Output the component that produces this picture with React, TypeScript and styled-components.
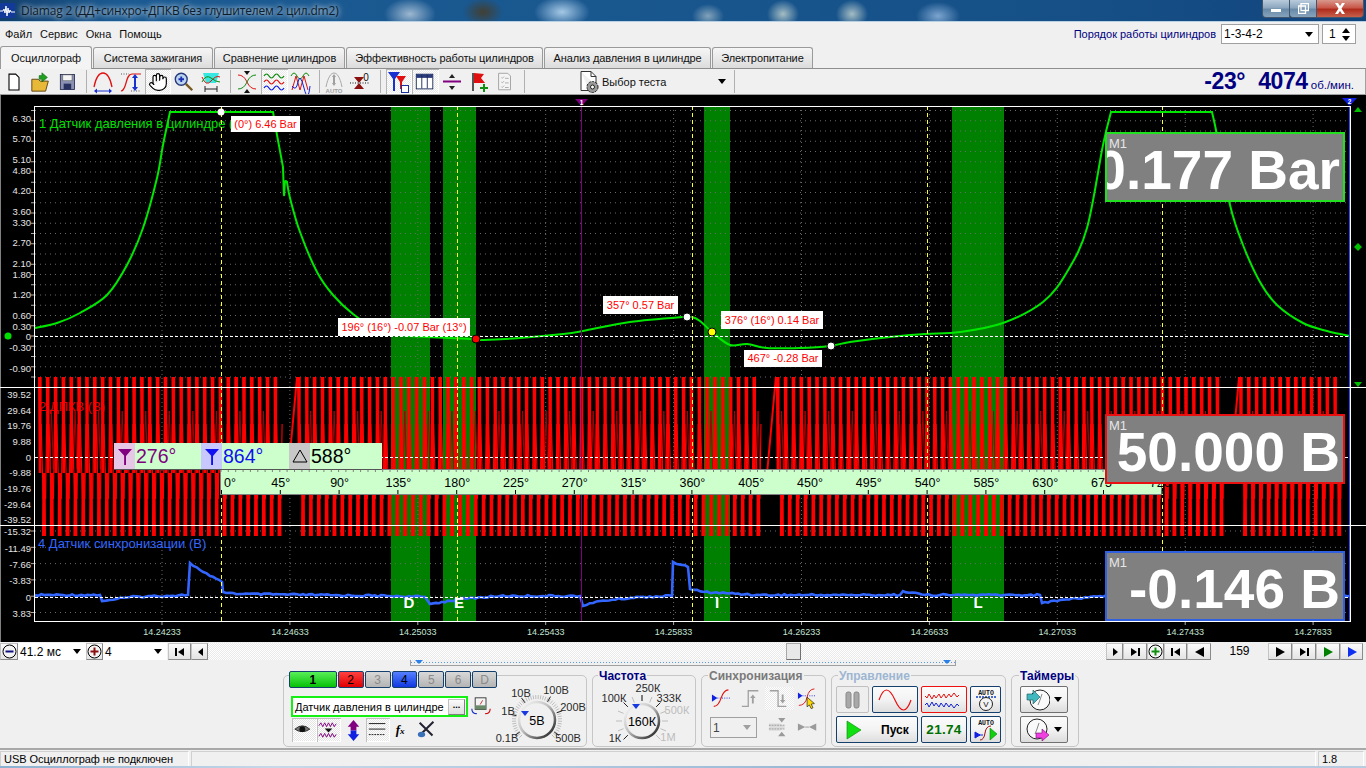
import React from "react";
import styled, { createGlobalStyle } from "styled-components";
import { Hand } from "lucide-react";

const Global = createGlobalStyle`
  html, body { margin: 0; padding: 0; background: #f0f0f0; }
  * { box-sizing: border-box; }
`;

const UI = `"Liberation Sans", Arial, sans-serif`;

const Page = styled.div`
  width: 1366px; height: 768px; overflow: hidden; display: flex; flex-direction: column;
  background: #f0f0f0; font-family: ${UI}; font-size: 11px; color: #000;
`;

/* ---------- window title ---------- */
const TitleBar = styled.div`
  height: 22px; flex: none; display: flex; align-items: flex-start; position: relative;
  border-bottom: 1px solid #b8d0e4;
  background:
    radial-gradient(ellipse 26px 16px at 410px 14px, rgba(200,215,230,.75), transparent),
    radial-gradient(ellipse 20px 14px at 483px 12px, rgba(70,60,40,.9), transparent),
    radial-gradient(ellipse 28px 16px at 562px 12px, rgba(190,220,245,.85), transparent),
    radial-gradient(ellipse 16px 12px at 708px 16px, rgba(175,195,205,.7), transparent),
    radial-gradient(ellipse 16px 14px at 783px 14px, rgba(200,215,210,.8), transparent),
    radial-gradient(ellipse 16px 14px at 852px 14px, rgba(200,215,210,.8), transparent),
    radial-gradient(ellipse 22px 14px at 938px 16px, rgba(150,185,225,.8), transparent),
    linear-gradient(90deg, #123f6c 0, #1b5a92 120px, #19578f 600px, #154f86 1100px, #12447c 1366px);
`;
const AppIcon = styled.svg`width: 15px; height: 15px; margin: 3px 0 0 0; flex: none;`;
const TitleText = styled.div`
  margin: 3px 0 0 6px; font: 12px/16px "Open Sans", sans-serif; color: #0c1c2c; letter-spacing: -0.2px;
  text-shadow: 0 0 5px rgba(255,255,255,.85), 0 0 8px rgba(255,255,255,.6);
`;
const WinButtons = styled.div`margin: 0 2px 0 auto; display: flex; height: 18px;`;
const WinBtn = styled.div<{ $w: number; $close?: boolean }>`
  width: ${p => p.$w}px; height: 18px; display: flex; align-items: center; justify-content: center;
  border: 1px solid #41566c; border-top: none; margin-left: -1px;
  border-radius: ${p => (p.$close ? "0 0 4px 0" : p.$w === 28 ? "0 0 0 4px" : "0")};
  background: ${p => (p.$close
    ? "linear-gradient(#d9988c 0, #c8584a 45%, #b02c1c 55%, #c6604c 100%)"
    : "linear-gradient(#b9cbdc 0, #8ea7bf 45%, #688aa8 55%, #86a3bc 100%)")};
`;

/* ---------- menu ---------- */
const MenuBar = styled.div`height: 24px; flex: none; display: flex; align-items: center; padding-left: 5px; background: #f0f0f0;`;
const MenuItem = styled.span`margin-right: 8px; font-size: 11px; color: #111;`;
const OrderBox = styled.div`margin-left: auto; display: flex; align-items: center; padding-right: 10px;`;
const OrderLabel = styled.span`color: #000080; font-size: 11px; margin-right: 5px;`;
const Combo = styled.div<{ $w: number; $h?: number; $bordered?: boolean; $disabled?: boolean }>`
  width: ${p => p.$w}px; height: ${p => p.$h ?? 17}px; display: flex; align-items: center; justify-content: space-between;
  background: ${p => (p.$disabled ? "#f0f0f0" : "#fff")}; padding: 0 5px 0 2px; font-size: 12px;
  color: ${p => (p.$disabled ? "#444" : "#000")};
  border: ${p => (p.$bordered ? "1px solid #a0a0a0" : "none")};
`;
const DownTri = styled.span<{ $c?: string }>`
  width: 0; height: 0; border-left: 4px solid transparent; border-right: 4px solid transparent;
  border-top: 5px solid ${p => p.$c ?? "#000"};
`;
const Spin = styled.div`
  width: 34px; height: 20px; margin-left: 3px; background: #fff; border: 1px solid #a0a0a0; display: flex;
  align-items: center; justify-content: space-between; padding: 0 5px 0 6px; font-size: 12px;
`;
const SpinArrows = styled.div`display: flex; flex-direction: column; gap: 3px;`;
const UpTri = styled.span`
  width: 0; height: 0; border-left: 4px solid transparent; border-right: 4px solid transparent; border-bottom: 5px solid #000;
`;

/* ---------- tabs ---------- */
const TabBar = styled.div`height: 23px; flex: none; display: flex; align-items: flex-end; gap: 1px; border-bottom: 1px solid #8e8e8e;`;
const Tab = styled.div<{ $w: number; $active?: boolean }>`
  width: ${p => p.$w}px; height: ${p => (p.$active ? 23 : 21)}px; display: flex; align-items: center; justify-content: center;
  border: 1px solid #9a9a9a; border-bottom: none; border-radius: 3px 3px 0 0; font-size: 11px; color: #111; letter-spacing: -0.1px;
  background: ${p => (p.$active ? "#f4f4f4" : "linear-gradient(#f6f6f6, #dcdcdc)")};
  margin-bottom: ${p => (p.$active ? -1 : 0)}px; position: relative;
`;

/* ---------- toolbar ---------- */
const ToolBar = styled.div`
  height: 26px; flex: none; display: flex; align-items: center; padding-left: 1px; position: relative;
  border-bottom: 1px solid #a0a0a0; border-right: 1px solid #a0a0a0;
`;
const ToolGroup = styled.div<{ $ml?: number }>`display: flex; align-items: center; margin-left: ${p => p.$ml ?? 0}px;`;
const ToolBtn = styled.div<{ $w: number; $active?: boolean }>`
  width: ${p => p.$w}px; height: 25px; display: flex; align-items: center; justify-content: center; flex: none;
  background: ${p => (p.$active ? "repeating-conic-gradient(#fff 0 25%, #e9e9e9 0 50%) 0 0/2px 2px" : "transparent")};
  box-shadow: ${p => (p.$active ? "inset 1px 1px 0 #b4b4b4, inset -1px -1px 0 #fff" : "none")};
`;
const Sep = styled.div<{ $ml?: number }>`width: 1px; height: 23px; background: #b0b0b0; flex: none; margin-left: ${p => p.$ml ?? 0}px;`;
const TestSelect = styled.div`display: flex; align-items: center; width: 201px; flex: none; padding-left: 52px; font-size: 11px; color: #111; white-space: nowrap;`;
const TestLabel = styled.span`margin-left: 1px; flex: 1;`;
const RpmBox = styled.div`margin-left: auto; padding-right: 11px; display: flex; align-items: baseline; color: #000080; white-space: nowrap;`;
const RpmBig = styled.span<{ $mr?: number }>`font-size: 23px; font-weight: 700; letter-spacing: -0.4px; margin-right: ${p => p.$mr ?? 0}px;`;
const RpmUnit = styled.span`font-size: 11.5px; margin-left: 3px;`;

/* ---------- chart ---------- */
const Chart = styled.div`height: 547px; flex: none; background: #000; position: relative; overflow: hidden;`;
const ChartSvg = styled.svg`display: block; position: absolute; inset: 0;`;
const Tag = styled.div<{ $x: number; $y: number; $w: number; $h?: number }>`
  position: absolute; left: ${p => p.$x}px; top: ${p => p.$y - 96}px; width: ${p => p.$w}px; height: ${p => p.$h ?? 18}px;
  background: #fff; color: #ff0000; font-size: 11px; line-height: ${p => p.$h ?? 18}px; text-align: center; white-space: nowrap;
`;
const Reading = styled.div<{ $y: number; $c: string }>`
  position: absolute; left: 1105px; top: ${p => p.$y - 96}px; width: 240px; height: 70px; background: #808080;
  border: 2px solid ${p => p.$c}; overflow: hidden; color: #fff; display: flex; justify-content: flex-end;
`;
const ReadingM = styled.span`position: absolute; left: 2px; top: 2px; font-size: 13px; color: #e6e6e6; line-height: 15px;`;
const ReadingVal = styled.span`font-size: 55px; line-height: 72px; font-weight: 700; white-space: nowrap; padding-right: 3px; flex: none;`;
const Delta = styled.div`
  position: absolute; left: 114px; top: 348px; width: 268px; height: 26px; background: #ccffcc; display: flex;
  box-shadow: 0 1px 0 #555;
`;
const DeltaSeg = styled.div<{ $w: number; $c: string }>`
  width: ${p => p.$w}px; display: flex; align-items: center; color: ${p => p.$c}; font-size: 19.5px; white-space: nowrap;
`;
const DeltaIcon = styled.div<{ $bg: string }>`width: 21px; height: 26px; background: ${p => p.$bg}; display: flex; align-items: center; justify-content: center; margin-right: 1px;`;

/* ---------- scroll row ---------- */
const ScrollRow = styled.div`height: 18px; flex: none; display: flex; align-items: stretch; padding-top: 1px; background: #f0f0f0;`;
const NavBtn = styled.div<{ $w: number; $ml?: number }>`
  width: ${p => p.$w}px; flex: none; display: flex; align-items: center; justify-content: center; margin-left: ${p => p.$ml ?? 0}px;
  background: linear-gradient(#fafafa, #e4e4e4); border: 1px solid #c4c4c4; border-right-color: #8a8a8a; border-bottom-color: #8a8a8a;
`;
const Track = styled.div`
  flex: none; width: 898px; position: relative;
  background: repeating-conic-gradient(#fff 0 25%, #eaeaea 0 50%) 0 0/2px 2px;
`;
const Thumb = styled.div`
  position: absolute; left: 578px; top: 0; width: 15px; height: 17px; background: #e8e8e8;
  border: 1px solid #a8a8a8; border-right-color: #707070; border-bottom-color: #707070;
`;
const Counter = styled.div`width: 57px; flex: none; text-align: center; font-size: 12px; line-height: 16px;`;

/* ---------- control panel ---------- */
const Panel = styled.div`height: 88px; flex: none; display: flex; flex-direction: column;`;
const Strip = styled.div`
  margin-left: 410px; width: 546px; height: 6px; flex: none; border: 1px solid #a0a0a0; border-top: none;
  background: repeating-linear-gradient(90deg, #5b9bdc 0 1px, transparent 1px 3px) 0 2px/100% 1px no-repeat; position: relative;
`;
const StripTri = styled.span<{ $l: number }>`
  position: absolute; top: 0; left: ${p => p.$l}px; width: 0; height: 0; border-left: 4px solid transparent;
  border-right: 4px solid transparent; border-top: 4px solid #2a80e8;
`;
const Groups = styled.div`display: flex; gap: 5px; padding-left: 283px; margin-top: 9px;`;
const Group = styled.div<{ $w: number }>`
  width: ${p => p.$w}px; height: 72px; flex: none; border: 1px solid #c6c6c6; border-radius: 5px; position: relative;
`;
const Legend = styled.span<{ $c: string; $l: number }>`
  position: absolute; top: -7px; left: ${p => p.$l}px; padding: 0 1px; background: #f0f0f0; font-size: 12px; line-height: 15px;
  font-weight: 700; color: ${p => p.$c}; white-space: nowrap;
`;
const ChannelWrap = styled.div`display: flex; margin-top: -5px; padding-left: 5px;`;
const ChannelLeft = styled.div`width: 208px; flex: none; display: flex; flex-direction: column;`;
const ChanRow = styled.div`display: flex; height: 17px; gap: 1px;`;
const ChanBtn = styled.div<{ $w: number; $kind: "green" | "red" | "blue" | "off" }>`
  width: ${p => p.$w}px; display: flex; align-items: center; justify-content: center; font-size: 12px;
  font-weight: ${p => (p.$kind === "green" ? 700 : 400)};
  color: ${p => (p.$kind === "off" ? "#8a8a8a" : "#000")};
  border: 1px solid #15406e; border-radius: 2px;
  background: ${p => ({
    green: "linear-gradient(#58f058, #08c008)",
    red: "linear-gradient(#ff4040, #e00000)",
    blue: "linear-gradient(#5580ff, #1038e0)",
    off: "linear-gradient(#d8d8d8, #b4b4b4)",
  }[p.$kind])};
`;
const NameRow = styled.div`display: flex; align-items: center; margin: 8px 0 0 2px; height: 21px;`;
const NameBox = styled.div`
  width: 177px; height: 21px; border: 2px solid #14f014; background: #fff; display: flex; align-items: center;
  justify-content: space-between; padding: 0 1px 0 2px; font-size: 11px; white-space: nowrap; flex: none;
`;
const Dots = styled.div`
  width: 17px; height: 16px; background: linear-gradient(#fafafa, #dedede); border: 1px solid #c0c0c0; border-right-color: #808080;
  border-bottom-color: #808080; font-size: 9px; font-weight: 700; line-height: 10px; text-align: center;
`;
const MeterSlot = styled.div`margin-left: 3px;`;
const IconRow = styled.div`display: flex; margin: 1px 0 0 3px;`;
const IconCell = styled.div<{ $active?: boolean }>`
  width: 24.5px; height: 24px; display: flex; align-items: center; justify-content: center;
  background: ${p => (p.$active ? "repeating-conic-gradient(#fff 0 25%, #e4e4e4 0 50%) 0 0/2px 2px" : "transparent")};
  box-shadow: ${p => (p.$active ? "inset 1px 1px 0 #c0c0c0, inset -1px -1px 0 #fff" : "none")};
`;
const DialSlot = styled.div`margin: 13px 0 0 -1px;`;
const FreqSlot = styled.div`padding: 4px 0 0 4px;`;
const SyncGrid = styled.div`
  display: grid; grid-template-columns: repeat(4, 28.5px); grid-template-rows: 23px 23px; row-gap: 6px; padding: 11px 0 0 6px;
`;
const SyncCell = styled.div<{ $span?: number; $active?: boolean }>`
  grid-column: span ${p => p.$span ?? 1}; display: flex; align-items: center; justify-content: center;
  background: ${p => (p.$active ? "repeating-conic-gradient(#fff 0 25%, #e8e8e8 0 50%) 0 0/2px 2px" : "transparent")};
`;
const SyncCombo = styled.div`width: 47px; margin: 0 auto 0 2px;`;
const CtlGrid = styled.div`
  display: grid; grid-template-columns: 33px 46px 46px 31px; grid-template-rows: 27px 27px; column-gap: 3px; row-gap: 3px; padding: 10px 0 0 4px;
`;
const CtlBtn = styled.div<{ $span?: number; $b: string; $off?: boolean }>`
  grid-column: span ${p => p.$span ?? 1}; display: flex; align-items: center; justify-content: center;
  border: 1px solid ${p => p.$b}; border-radius: 2px;
  background: ${p => (p.$off ? "#eeeeee" : "linear-gradient(#fbfbfb 0, #f3f3f3 50%, #dedede 100%)")};
`;
const StartInner = styled.div`display: flex; align-items: center; width: 100%; padding-left: 8px; font-weight: 700; font-size: 12px;`;
const StartLabel = styled.span`margin-left: 18px;`;
const Hz = styled.span`color: #007000; font-weight: 700; font-size: 13.5px; letter-spacing: .3px;`;
const TimerCol = styled.div`display: flex; flex-direction: column; gap: 3px; padding: 10px 0 0 8px;`;
const TimerBtn = styled.div`
  width: 48px; height: 27px; display: flex; align-items: center; justify-content: center; gap: 4px; border: 1px solid #707070; border-radius: 2px;
  background: linear-gradient(#fbfbfb 0, #f3f3f3 50%, #dcdcdc 100%);
`;

/* ---------- status ---------- */
const Status = styled.div`height: 18px; flex: none; display: flex; border-top: 2px solid #a8a8a8; font-size: 11px; letter-spacing: -0.05px; padding-top: 1px; background: #f0f0f0;`;
const StatusCell = styled.div<{ $w?: number; $grow?: boolean }>`
  width: ${p => (p.$w ? p.$w + "px" : "auto")}; flex: ${p => (p.$grow ? 1 : "none")}; border-left: 1px solid #d0d0d0; border-top: 1px solid #d0d0d0;
  border-right: 1px solid #fff; padding-left: 3px; line-height: 14px; white-space: nowrap; margin-right: 2px;
`;
const Taskbar = styled.div`height: 3px; flex: none; background: linear-gradient(90deg, #8ab0d0, #c8d8e8 20%, #9ab8d4 60%, #b8cce0);`;

/* ---------- drawing helpers ---------- */
const Ic: React.FC<{ s?: number; w?: number; h?: number; vb?: string; children: React.ReactNode }> = ({ s = 24, w, h, vb = "0 0 24 24", children }) => (
  <svg width={w ?? s} height={h ?? s} viewBox={vb} style={{ display: "block", flex: "none" }}>{children}</svg>
);

const Wave3 = () => (
  <>
    <path d="M2 6q2.5-4 5 0t5 0 5 0 5 0" fill="none" stroke="#0a8a0a" strokeWidth="1.2" />
    <path d="M2 12q2.5-4 5 0t5 0 5 0 5 0" fill="none" stroke="#e01010" strokeWidth="1.2" />
    <path d="M2 18q2.5-4 5 0t5 0 5 0 5 0" fill="none" stroke="#1020e0" strokeWidth="1.2" />
  </>
);

const NavGlyph: React.FC<{ kind: "first" | "prev" | "next" | "last" | "big-prev" | "big-next"; c?: string }> = ({ kind, c = "#000" }) => {
  const d = {
    first: "M2 3h2v8H2zM11 3v8L5 7z",
    prev: "M10 3v8L5 7z",
    next: "M5 3v8l5-4z",
    last: "M12 3h-2v8h2zM3 3v8l6-4z",
    "big-prev": "M12 2v10L3 7z",
    "big-next": "M3 2v10l9-5z",
  }[kind];
  return <Ic w={14} h={14} vb="0 0 14 14"><path d={d} fill={c} /></Ic>;
};

const RoundGlyph: React.FC<{ c: string; plus?: boolean }> = ({ c, plus }) => (
  <Ic w={15} h={15} vb="0 0 15 15">
    <circle cx="7.5" cy="7.5" r="6.5" fill="#f4f4f4" stroke="#000" />
    <path d={plus ? "M3.5 6.5h3v-3h2v3h3v2h-3v3h-2v-3h-3z" : "M3.5 6.5h8v2h-8z"} fill={c} />
  </Ic>
);

const Dial: React.FC<{
  id: string; w: number; h: number; cx: number; cy: number; r: number; center: string; tr: [number, number]; major: number[];
  labels: { t: string; x: number; y: number; off?: boolean }[]; minorLong?: boolean;
}> = ({ id, w, h, cx, cy, r, center, tr, labels, major, minorLong }) => {
  const minor: number[] = [];
  const step = minorLong ? 22.5 : 6;
  for (let a = -135; a <= 135.1; a += step) minor.push(a);
  const seg = (a: number, r0: number, r1: number) => {
    const t = ((a - 90) * Math.PI) / 180;
    return `M${cx + r0 * Math.cos(t)} ${cy + r0 * Math.sin(t)}L${cx + r1 * Math.cos(t)} ${cy + r1 * Math.sin(t)}`;
  };
  return (
    <svg width={w} height={h} style={{ display: "block", overflow: "visible" }}>
      <defs>
        <linearGradient id={id} x1="0" y1="0" x2="1" y2="1">
          <stop offset="0" stopColor="#fff" /><stop offset=".45" stopColor="#c0c0c0" /><stop offset="1" stopColor="#111" />
        </linearGradient>
      </defs>
      <path d={minor.map(a => seg(a, r + 3, r + (minorLong ? 9 : 7))).join("")} stroke="#bdbdbd" strokeWidth="1" fill="none" />
      <path d={major.map(a => seg(a, r + 3, r + 9)).join("")} stroke="#222" strokeWidth="1" fill="none" />
      <circle cx={cx} cy={cy} r={r} fill="#f0f0f0" stroke={`url(#${id})`} strokeWidth="2.5" />
      <path d={`M${tr[0] - 4} ${tr[1] - 3}h8l-4 5z`} fill="#1838e0" />
      <text x={cx} y={cy + 4.5} textAnchor="middle" fontSize="12.5" fontFamily="Liberation Sans" fill="#000">{center}</text>
      {labels.map(l => (
        <text key={l.t} x={l.x} y={l.y} textAnchor="middle" fontSize="11" fontFamily="Liberation Sans" fill={l.off ? "#bcbcbc" : "#2a2a2a"}>{l.t}</text>
      ))}
    </svg>
  );
};

/* ---------- chart data ---------- */
type Pt = [number, number];
const GREEN_SEGS: Pt[][] = [
  [[35, 329], [57, 324], [80, 314], [107, 296], [127, 266], [143, 229], [157, 179], [163, 146], [170, 113]],
  [[170, 113], [273, 113]],
  [[273, 113], [277, 136], [283, 168]],
  [[283, 168], [284, 196], [285, 183], [287, 183]],
  [[287, 183], [290, 199], [300, 233], [317, 273], [333, 296], [353, 315], [375, 329], [400, 336], [427, 338], [473, 340],
   [483, 341], [520, 339], [563, 335], [583, 332], [630, 323], [683, 318], [692, 318], [700, 322], [712, 333], [730, 346], [747, 345], [767, 349],
   [800, 349], [830, 347], [850, 343], [890, 338], [925, 335], [960, 333], [1003, 324], [1043, 303], [1067, 273], [1087, 229], [1103, 146], [1111, 113]],
  [[1111, 113], [1212, 113]],
  [[1212, 113], [1217, 136], [1230, 206], [1243, 246], [1260, 283], [1277, 306], [1303, 324], [1327, 332], [1350, 337]],
];
const BLUE: Pt[] = [
  [35, 596], [100, 596], [102, 602], [110, 601], [130, 598], [188, 596], [190, 564], [200, 571], [210, 577], [222, 583], [223, 593], [240, 595], [390, 597],
  [425, 598], [430, 605], [460, 600], [500, 597], [580, 597], [583, 607], [600, 602], [640, 598], [672, 597], [673, 563], [688, 568], [690, 590], [704, 593],
  [760, 596], [900, 596], [903, 592], [925, 596], [1040, 596], [1042, 604], [1060, 601], [1100, 597], [1350, 597],
];
const rnd = (n: number) => {
  const v = Math.sin(n * 12.9898) * 43758.5453;
  return (v - Math.floor(v)) * 2 - 1;
};
const noisy = (pts: Pt[], amp: number) => {
  let d = `M${pts[0][0]} ${pts[0][1]}`;
  let n = 0;
  for (let i = 1; i < pts.length; i++) {
    const [x0, y0] = pts[i - 1];
    const [x1, y1] = pts[i];
    const steps = Math.max(1, Math.floor((x1 - x0) / 3));
    for (let s = 1; s <= steps; s++) {
      const t = s / steps;
      const e = s === steps ? 0 : rnd(++n) * amp;
      d += `L${(x0 + (x1 - x0) * t).toFixed(1)} ${(y0 + (y1 - y0) * t + e).toFixed(1)}`;
    }
  }
  return d;
};
/* Catmull-Rom through each segment, so the pressure trace reads as a curve */
const smooth = (segs: Pt[][]) => {
  let d = `M${segs[0][0][0]} ${segs[0][0][1]}`;
  segs.forEach(pts => {
    for (let i = 0; i < pts.length - 1; i++) {
      const p0 = pts[Math.max(0, i - 1)];
      const p1 = pts[i];
      const p2 = pts[i + 1];
      const p3 = pts[Math.min(pts.length - 1, i + 2)];
      const c1x = p1[0] + (p2[0] - p0[0]) / 6;
      const c1y = p1[1] + (p2[1] - p0[1]) / 6;
      const c2x = p2[0] - (p3[0] - p1[0]) / 6;
      const c2y = p2[1] - (p3[1] - p1[1]) / 6;
      d += `C${c1x.toFixed(1)} ${c1y.toFixed(1)} ${c2x.toFixed(1)} ${c2y.toFixed(1)} ${p2[0]} ${p2[1]}`;
    }
  });
  return d;
};
const buildRed = () => {
  const gaps = [[284, 298], [757, 773], [1220, 1238]];
  let bars = "";
  let zig = "";
  let dark = "";
  let ramps = "";
  let pen = false;
  const per = 7.85;
  for (let k = 5; ; k++) {
    const x = -0.25 + per * k;
    if (x > 1340) break;
    const inGap = gaps.some(g => x + 3 > g[0] && x < g[1]);
    if (inGap) { pen = false; continue; }
    if (!pen) {
      if (x > 100) ramps += `M${x - 10} 476L${x - 1} 378`;
      pen = true;
    }
    bars += `M${x - 1} 378H${x + 2.7}L${x + 2.5} 474H${x - 0.3}Z`;
    bars += `M${x + 3} 537H${x + 7}L${x + 6.6} 474H${x + 3.4}Z`;
    zig += `M${x + 2.2} 425L${x + 4.2} 500M${x + 6.6} 500L${x + 7.6} 425`;
    if (k % 3 === 0) dark += `M${x + 3} 470L${x + 4.7} 412L${x + 6.4} 470`;
  }
  return { bars, zig, dark, ramps };
};
const RED = buildRed();

const YL: [string, number][] = [
  ["6.30", 119], ["5.70", 139], ["5.10", 160], ["4.80", 171], ["4.20", 191], ["3.60", 212], ["3.30", 223], ["2.70", 243], ["2.10", 264], ["1.80", 275],
  ["1.20", 295], ["0.60", 316], ["0.30", 327], ["0", 337], ["-0.30", 348], ["-0.90", 369],
  ["39.52", 395], ["29.64", 411], ["19.76", 426], ["9.88", 442], ["0", 458], ["-9.88", 473], ["-19.76", 489], ["-29.64", 505], ["-39.52", 520],
  ["-15.32", 532], ["-11.49", 549], ["-7.66", 565], ["-3.83", 581], ["0", 598], ["3.83", 614],
];
const XL = ["14.24233", "14.24633", "14.25033", "14.25433", "14.25833", "14.26233", "14.26633", "14.27033", "14.27433", "14.27833"];
const xGrid = XL.map((_, i) => 162 + i * 127.9);
const range = (a: number, b: number, s: number) => { const r: number[] = []; for (let v = a; v <= b; v += s) r.push(v); return r; };
const hGrid = [...range(337 - 10.25 * 22, 378, 10.25), ...range(526 + 6, 622, 16.3)];
const Y = (y: number) => y - 96;

const Plot = () => (
  <ChartSvg width="1366" height="547" viewBox="0 0 1366 547" fontFamily="Liberation Sans">
    <line x1=".5" y1="0" x2=".5" y2="547" stroke="#808080" />
    {[[391, 430], [443, 476], [704, 730], [952, 1004]].map(([a, b]) => (
      <rect key={a} x={a} y={Y(107)} width={b - a} height={515} fill="#008000" />
    ))}
    <path d={hGrid.map(y => `M35 ${Y(y)}H1349`).join("")} stroke="#6a6a6a" strokeDasharray="1 4" />
    <path d={xGrid.map(x => `M${x} ${Y(107)}V${Y(622)}`).join("")} stroke="#6a6a6a" strokeDasharray="1 3" />
    <path d={hGrid.map(y => `M31 ${Y(y)}H34`).join("")} stroke="#aaa" />
    <path d={xGrid.map(x => `M${x} ${Y(622)}v4`).join("")} stroke="#aaa" />
    <g fontSize="9.5" fill="#e4e4e4" textAnchor="end">
      {YL.map(([t, y]) => <text key={t + y} x="31" y={Y(y) + 3.5}>{t}</text>)}
    </g>
    <g fontSize="9" fill="#c4e4d4" textAnchor="middle">
      {XL.map((t, i) => <text key={t} x={xGrid[i]} y={Y(636)}>{t}</text>)}
    </g>
    <text x="39" y={Y(129)} fontSize="13" fill="#00e000">1 Датчик давления в цилиндре (Bar)</text>
    <text x="38" y={Y(549)} fontSize="13" fill="#3366ff">4 Датчик синхронизации (В)</text>
    <text x="39" y={Y(412)} fontSize="13" fill="#e80000">2 ДПКВ (В)</text>
    <g transform="translate(0,-96)">
      <path d={RED.dark} fill="none" stroke="#a80000" strokeWidth="1" />
      <path d={RED.zig} fill="none" stroke="#ff0000" strokeWidth="1.1" />
      <path d={RED.bars} fill="#ff0000" />
      <path d={RED.ramps} fill="none" stroke="#ff0000" strokeWidth="2" />
      <path d={noisy(BLUE, 0.9)} fill="none" stroke="#3366ff" strokeWidth="2.6" />
      <path d={smooth(GREEN_SEGS)} fill="none" stroke="#00e800" strokeWidth="2" />
    </g>
    <path d={[337, 458, 598].map(y => `M35 ${Y(y) + .5}H1349`).join("")} stroke="#fff" strokeDasharray="3 2" />
    <path d={[221, 457, 692, 927, 1162].map(x => `M${x + .5} ${Y(107)}V${Y(622)}`).join("")} stroke="#ffff30" strokeDasharray="4 3" />
    <path d={`M581.5 ${Y(107)}V${Y(622)}`} stroke="#800080" />
    <path d={`M1349.5 ${Y(107)}V${Y(622)}`} stroke="#3050ff" />
    <path d={`M34 ${Y(107) + .5}H1351M34.5 ${Y(107)}V${Y(622)}M34 ${Y(622) + .5}H1351M1350.5 ${Y(107)}V${Y(622)}`} stroke="#fff" fill="none" />
    <path d={`M0 ${Y(388) + .5}H1366M0 ${Y(526) + .5}H1366`} stroke="#fff" />

    <circle cx="221" cy={Y(113)} r="3.5" fill="#fff" />
    <circle cx="476" cy={Y(340)} r="4" fill="#ff0000" stroke="#000" />
    <circle cx="687" cy={Y(318)} r="4" fill="#fff" stroke="#000" />
    <circle cx="712" cy={Y(333)} r="4" fill="#ffff00" stroke="#000" />
    <circle cx="831" cy={Y(347)} r="4" fill="#fff" stroke="#000" />
    <circle cx="8" cy={Y(337)} r="3.5" fill="#00e000" />

    <path d={`M575 ${Y(100)}h13l-6.5 7z`} fill="#800080" />
    <text x="581.5" y={Y(106)} fontSize="6.5" fontWeight="700" fill="#fff" textAnchor="middle">1</text>
    <path d={`M1342 ${Y(99)}h15l-7.5 8z`} fill="#1020e0" />
    <text x="1349.5" y={Y(105)} fontSize="6.5" fontWeight="700" fill="#fff" textAnchor="middle">2</text>
    <path d={`M1358 ${Y(108)}l4 5h-8z`} fill="#00c000" />
    <path d={`M1358 ${Y(244)}l4 4-4 4-4-4z`} fill="#00c000" />
    <path d={`M1354 ${Y(383)}h8l-4 5z`} fill="#00c000" />

    <g fontSize="15" fontWeight="700" fill="#fff" textAnchor="middle">
      <text x="409" y={Y(609)}>D</text>
      <text x="459" y={Y(609)}>E</text>
      <text x="717" y={Y(609)}>I</text>
      <text x="978" y={Y(609)}>L</text>
    </g>

    <rect x="220.5" y={Y(470) + .5} width="941" height="25" fill="#ccffcc" stroke="#808080" />
    <path d={range(0, 128, 1).map(i => `M${(221 + i * 7.35).toFixed(1)} ${Y(471)}v2`).join("")} stroke="#808080" />
    <path d={range(0, 16, 1).map(i => `M${(221 + i * 58.8 + .5).toFixed(1)} ${Y(491)}v4`).join("")} stroke="#000" />
    <g fontSize="12.5" fill="#000" textAnchor="middle">
      <text x="230" y={Y(488)}>0°</text>
      {range(1, 16, 1).map(i => <text key={i} x={221 + i * 58.8 + 1} y={Y(488)}>{i * 45}°</text>)}
    </g>
  </ChartSvg>
);

const Funnel: React.FC<{ c: string }> = ({ c }) => (
  <Ic w={16} h={20} vb="0 0 16 20">
    <path d="M1 3h14L9 10v9H7.5V10z" fill={c} />
    <path d="M8 8v11" stroke={c} strokeWidth="1.5" />
  </Ic>
);

const Arrow2H = "M3 21l3-2.5v2h12v-2l3 2.5-3 2.5v-2H6v2z";

const App: React.FC = () => (
  <Page>
    <Global />
    <TitleBar>
      <AppIcon viewBox="0 0 15 15">
        <rect width="15" height="15" fill="#123a9a" />
        <path d="M0 8h3l1-2 1 4 1-7 1 10 1-8 1 5 1-3 1 2h4" fill="none" stroke="#fff" strokeWidth="1" />
      </AppIcon>
      <TitleText>Diamag 2 (ДД+синхро+ДПКВ без глушителем 2 цил.dm2)</TitleText>
      <WinButtons>
        <WinBtn $w={28}><Ic w={10} h={6} vb="0 0 10 6"><rect x="0" y="3" width="10" height="3" fill="#fff" /></Ic></WinBtn>
        <WinBtn $w={28}><Ic w={11} h={11} vb="0 0 11 11"><path d="M3 .5h7.5v7H3zM.5 3h7v7.5h-7z" fill="none" stroke="#fff" strokeWidth="1.3" /></Ic></WinBtn>
        <WinBtn $w={48} $close><Ic w={12} h={11} vb="0 0 12 11"><path d="M1 0h3l2 3 2-3h3L7.5 5.5 11 11H8L6 8l-2 3H1l3.5-5.5z" fill="#fff" /></Ic></WinBtn>
      </WinButtons>
    </TitleBar>

    <MenuBar>
      <MenuItem>Файл</MenuItem>
      <MenuItem>Сервис</MenuItem>
      <MenuItem>Окна</MenuItem>
      <MenuItem>Помощь</MenuItem>
      <OrderBox>
        <OrderLabel>Порядок работы цилиндров</OrderLabel>
        <Combo $w={98} $h={20} $bordered>1-3-4-2<DownTri /></Combo>
        <Spin>1<SpinArrows><UpTri /><DownTri /></SpinArrows></Spin>
      </OrderBox>
    </MenuBar>

    <TabBar>
      <Tab $w={92} $active>Осциллограф</Tab>
      <Tab $w={120}>Система зажигания</Tab>
      <Tab $w={131}>Сравнение цилиндров</Tab>
      <Tab $w={197}>Эффективность работы цилиндров</Tab>
      <Tab $w={167}>Анализ давления в цилиндре</Tab>
      <Tab $w={101}>Электропитание</Tab>
    </TabBar>

    <ToolBar>
      <ToolGroup>
        <ToolBtn $w={26.5}><Ic s={20}><path d="M6 2.5h8l4 4v15H6z" fill="#fff" stroke="#000" strokeWidth="1.3" /></Ic></ToolBtn>
        <ToolBtn $w={26.5}><Ic s={22}><path d="M2 9h7l2 2h9l-3 11H2z" fill="#e8b838" stroke="#5a4010" /><path d="M13 2l6 5-6 5V9h-3V5h3z" fill="#20a020" stroke="#0a600a" strokeWidth=".6" /></Ic></ToolBtn>
        <ToolBtn $w={26.5}><Ic s={20}><rect x="4" y="3" width="17" height="18" fill="#8a90b0" stroke="#202850" /><rect x="7" y="3.5" width="11" height="7" fill="#f4f4f4" stroke="#555" strokeWidth=".6" /><rect x="8" y="14" width="9" height="7" fill="#283060" /></Ic></ToolBtn>
      </ToolGroup>
      <Sep $ml={5.5} />
      <ToolGroup $ml={2.5}>
        <ToolBtn $w={27.5}><Ic s={24}><path d="M3 17C5 7 8 3 12 3s7 4 9 14" fill="none" stroke="#e01010" strokeWidth="1.3" /><path d={Arrow2H} fill="#1830d0" /></Ic></ToolBtn>
        <ToolBtn $w={27.5}><Ic s={24}><path d="M2 21c6 0 4-17 11-17h9" fill="none" stroke="#e01010" strokeWidth="1.2" /><path d="M2 4h8M12 21h9" stroke="#555" strokeDasharray="1 1.5" /><path d="M16 4l3 4h-2v9h2l-3 4-3-4h2V8h-2z" fill="#1830d0" /></Ic></ToolBtn>
        <ToolBtn $w={26} $active><Hand size={20} strokeWidth={1.4} color="#000" fill="#fff" /></ToolBtn>
        <ToolBtn $w={26}><Ic s={22}><circle cx="9" cy="9" r="6.5" fill="#bcd4f0" stroke="#263a7a" strokeWidth="1.5" /><path d="M6 8h2V6h2v2h2v2h-2v2H8v-2H6z" fill="#1830b0" /><path d="M14 14l7 7" stroke="#7a5a20" strokeWidth="2.6" /></Ic></ToolBtn>
        <ToolBtn $w={29}><Ic s={24}><path d="M4 3h16l-3 10H7z" fill="#38e8e0" /><path d="M3 7q4 10 9 4t9-4" fill="none" stroke="#e01010" /><path d="M3 12q4-8 9-4t9 4" fill="none" stroke="#108a10" /><path d="M6 16v6M18 16v6M6 19h12" stroke="#222" fill="none" /></Ic></ToolBtn>
      </ToolGroup>
      <Sep $ml={4} />
      <ToolGroup $ml={3}>
        <ToolBtn $w={27}><Ic s={24}><path d="M3 5q6 0 9 7t9 7" fill="none" stroke="#e01010" /><path d="M3 19q6 0 9-7t9-7" fill="none" stroke="#108a10" /><path d="M9 1h6l-3 4zM9 23h6l-3-4z" fill="#111" /></Ic></ToolBtn>
        <ToolBtn $w={27} $active><Ic s={24}><Wave3 /></Ic></ToolBtn>
        <ToolBtn $w={27}><Ic s={24}><path d="M2 6q3-6 6 0t6 0 6 0" fill="none" stroke="#108a10" /><path d="M3 20l4-14 4 14 4-14 4 14" fill="none" stroke="#e01010" /><path d="M3 16q4 6 6-4t6 6 6-2" fill="none" stroke="#1020e0" /></Ic></ToolBtn>
      </ToolGroup>
      <Sep $ml={4} />
      <ToolGroup $ml={1}>
        <ToolBtn $w={26}><Ic s={24}><path d="M4 17C6 7 9 3 12 3s6 4 8 14" fill="none" stroke="#a8a8a8" /><path d="M12 4l2 3h-1v6h1l-2 3-2-3h1V7h-1z" fill="#a0a0a0" /><text x="12" y="23" textAnchor="middle" fontSize="6" fontFamily="Liberation Sans" fontWeight="700" fill="#a0a0a0">AUTO</text></Ic></ToolBtn>
        <ToolBtn $w={26}><Ic s={24}><path d="M6 7h10l-5 6zM6 19h10l-5-6z" fill="#8a1010" /><path d="M2 13h20" stroke="#111" strokeDasharray="1 1.5" /><text x="18" y="11" textAnchor="middle" fontSize="10" fontFamily="Liberation Sans" fill="#111">0</text></Ic></ToolBtn>
      </ToolGroup>
      <Sep $ml={7} />
      <ToolGroup $ml={5}>
        <ToolBtn $w={26.5} $active><Ic s={24}><path d="M1 2h12l-5 7v12H6V9z" fill="#1830d0" /><path d="M9 6h10l-4 6v7h-2v-7z" fill="#e01010" /><rect x="14.5" y="15.5" width="7" height="7" fill="#fff" stroke="#1830a0" /></Ic></ToolBtn>
        <ToolBtn $w={26.5} $active><Ic s={22}><rect x="2.5" y="3.5" width="18" height="16" fill="#fff" stroke="#1a2a5a" /><rect x="2.5" y="3.5" width="18" height="4" fill="#2a3a7a" /><path d="M8.5 4v15M14.5 4v15" stroke="#1a2a5a" /></Ic></ToolBtn>
        <ToolBtn $w={26.5}><Ic s={24}><path d="M3 11.5h18" stroke="#800080" strokeWidth="2" /><path d="M12 4l3 4H9zM12 20l3-4H9z" fill="#222" /></Ic></ToolBtn>
        <ToolBtn $w={26.5}><Ic s={24}><path d="M7 3v18" stroke="#222" strokeWidth="1.5" /><path d="M8 3l10 1-3 4 4 5H8z" fill="#e01010" /><path d="M14 17h3v-3h2v3h3v2h-3v3h-2v-3h-3z" fill="#109010" /></Ic></ToolBtn>
        <ToolBtn $w={26.5}><Ic s={22}><path d="M5 2.5h10l3 3v15H5z" fill="#f4f4f4" stroke="#a0a0a0" /><path d="M8 7l1 1 2-2M8 12l1 1 2-2M8 17l1 1 2-2M12 8h4M12 13h4M12 18h4" stroke="#a8a8a8" fill="none" /></Ic></ToolBtn>
      </ToolGroup>
      <Sep $ml={6} />
      <TestSelect>
        <Ic s={24}><path d="M4 1.5h10l5 5v9M4 1.5v19h8" fill="#fff" stroke="#333" /><path d="M14 1.5v5h5" fill="none" stroke="#333" /><circle cx="15.5" cy="17" r="5.5" fill="#9a9a9a" stroke="#222" strokeDasharray="2.5 1" /><circle cx="15.5" cy="17" r="2" fill="#fff" stroke="#222" /></Ic>
        <TestLabel>Выбор теста</TestLabel>
        <DownTri />
      </TestSelect>
      <Sep $ml={8} />
      <RpmBox>
        <RpmBig $mr={13}>-23°</RpmBig>
        <RpmBig>4074</RpmBig>
        <RpmUnit>об./мин.</RpmUnit>
      </RpmBox>
    </ToolBar>

    <Chart>
      <Plot />
      <Tag $x={231} $y={117} $w={69} $h={16}>(0°) 6.46 Bar</Tag>
      <Tag $x={338} $y={319} $w={132}>196° (16°) -0.07 Bar (13°)</Tag>
      <Tag $x={603} $y={297} $w={75}>357° 0.57 Bar</Tag>
      <Tag $x={721} $y={312} $w={102}>376° (16°) 0.14 Bar</Tag>
      <Tag $x={744} $y={351} $w={78} $h={17}>467° -0.28 Bar</Tag>
      <Delta>
        <DeltaSeg $w={87} $c="#800080"><DeltaIcon $bg="#e6c8e6"><Funnel c="#800080" /></DeltaIcon>276°</DeltaSeg>
        <DeltaSeg $w={88} $c="#1010f0"><DeltaIcon $bg="#c8c8ff"><Funnel c="#1010f0" /></DeltaIcon>864°</DeltaSeg>
        <DeltaSeg $w={93} $c="#000">
          <DeltaIcon $bg="#c8c8c8"><Ic w={16} h={16} vb="0 0 16 16"><path d="M8 2l7 12H1z" fill="none" stroke="#000" /></Ic></DeltaIcon>588°
        </DeltaSeg>
      </Delta>
      <Reading $y={133} $c="#20e020"><ReadingM>M1</ReadingM><ReadingVal>0.177 Bar</ReadingVal></Reading>
      <Reading $y={415} $c="#e81010"><ReadingM>M1</ReadingM><ReadingVal>50.000 В</ReadingVal></Reading>
      <Reading $y={552} $c="#3060e0"><ReadingM>M1</ReadingM><ReadingVal>-0.146 В</ReadingVal></Reading>
    </Chart>

    <ScrollRow>
      <NavBtn $w={18}><RoundGlyph c="#101080" /></NavBtn>
      <Combo $w={68}>41.2 мс<DownTri /></Combo>
      <NavBtn $w={17}><RoundGlyph c="#8a1010" plus /></NavBtn>
      <Combo $w={64}>4<DownTri /></Combo>
      <NavBtn $w={23} $ml={1}><NavGlyph kind="first" /></NavBtn>
      <NavBtn $w={17}><NavGlyph kind="prev" /></NavBtn>
      <Track><Thumb /></Track>
      <NavBtn $w={17}><NavGlyph kind="next" /></NavBtn>
      <NavBtn $w={24}><NavGlyph kind="last" /></NavBtn>
      <NavBtn $w={17}><RoundGlyph c="#109010" plus /></NavBtn>
      <NavBtn $w={23}><NavGlyph kind="first" /></NavBtn>
      <NavBtn $w={24}><NavGlyph kind="big-prev" /></NavBtn>
      <Counter>159</Counter>
      <NavBtn $w={24}><NavGlyph kind="big-next" /></NavBtn>
      <NavBtn $w={24}><NavGlyph kind="last" /></NavBtn>
      <NavBtn $w={24}><NavGlyph kind="big-next" c="#008000" /></NavBtn>
      <NavBtn $w={23}><NavGlyph kind="big-next" c="#1030f0" /></NavBtn>
    </ScrollRow>

    <Panel>
      <Strip><StripTri $l={4} /><StripTri $l={532} /></Strip>
      <Groups>
        <Group $w={304}>
          <ChannelWrap>
            <ChannelLeft>
              <ChanRow>
                <ChanBtn $w={48} $kind="green">1</ChanBtn>
                <ChanBtn $w={26} $kind="red">2</ChanBtn>
                <ChanBtn $w={26} $kind="off">3</ChanBtn>
                <ChanBtn $w={26} $kind="blue">4</ChanBtn>
                <ChanBtn $w={26} $kind="off">5</ChanBtn>
                <ChanBtn $w={26} $kind="off">6</ChanBtn>
                <ChanBtn $w={25} $kind="off">D</ChanBtn>
              </ChanRow>
              <NameRow>
                <NameBox>Датчик давления в цилиндре<Dots>...</Dots></NameBox>
                <MeterSlot>
                  <Ic s={20}>
                    <rect x="5" y="1" width="13" height="14" fill="#f4f4f4" stroke="#222" /><rect x="5" y="10" width="13" height="5" fill="#6a8a6a" />
                    <path d="M11 9l3-5" stroke="#c01010" />
                    <path d="M1 14q0 6 6 6" fill="none" stroke="#1830c0" strokeWidth="1.4" /><path d="M23 14q0 6-6 6" fill="none" stroke="#d01010" strokeWidth="1.4" />
                  </Ic>
                </MeterSlot>
              </NameRow>
              <IconRow>
                <IconCell $active><Ic s={20}><path d="M1 11q9-8 18 0-9 6-18 0z" fill="#777" stroke="#222" /><circle cx="10" cy="11" r="3.5" fill="#111" /></Ic></IconCell>
                <IconCell $active><Ic s={23}><path d="M2 7l2-3 2 4 2-4 2 4 2-4 2 4 2-4 2 4 2-3M2 18l2-3 2 4 2-4 2 4 2-4 2 4 2-4 2 4 2-3" fill="none" stroke="#800080" /><path d="M8 10h8l-4 4z" fill="#111" /></Ic></IconCell>
                <IconCell><Ic s={23}><path d="M12 1l6 7h-3v4H9V8H6z" fill="#800080" /><path d="M12 23l6-7h-3v-4H9v4H6z" fill="#1020e0" /></Ic></IconCell>
                <IconCell $active><Ic s={22}><path d="M2 5h18M2 11h18" stroke="#111" /><path d="M2 17h18" stroke="#111" strokeDasharray="2 1" /></Ic></IconCell>
                <IconCell><Ic s={22}><text x="10" y="16" fontSize="14" fontFamily="Liberation Serif" fontStyle="italic" fontWeight="700" textAnchor="middle">f<tspan fontSize="10">x</tspan></text></Ic></IconCell>
                <IconCell><Ic s={22}><path d="M4 4l14 14M19 3l-14 14" stroke="#223" strokeWidth="2.2" /><ellipse cx="6" cy="17" rx="4" ry="3" fill="#3a70b8" /></Ic></IconCell>
              </IconRow>
            </ChannelLeft>
            <DialSlot>
              <Dial id="d1" w={90} h={62} cx={41} cy={36} r={18} center="5В" tr={[29, 30]} major={[-125, -78, -35, 30, 70, 125]}
                labels={[{ t: "10В", x: 25, y: 13 }, { t: "100В", x: 60, y: 10 }, { t: "1В", x: 12, y: 31 }, { t: "200В", x: 77, y: 27 }, { t: "0.1В", x: 11, y: 58 }, { t: "500В", x: 72, y: 58 }]} />
            </DialSlot>
          </ChannelWrap>
        </Group>

        <Group $w={104}>
          <Legend $c="#000080" $l={5}>Частота</Legend>
          <FreqSlot>
            <Dial id="d2" w={95} h={64} cx={45} cy={41} r={17} center="160К" tr={[39, 27]} minorLong major={[-135, -45, 0, 45]}
              labels={[{ t: "250К", x: 51, y: 12 }, { t: "100К", x: 17, y: 22 }, { t: "333К", x: 72, y: 22 }, { t: "500К", x: 80, y: 34, off: true }, { t: "1К", x: 18, y: 62 }, { t: "1М", x: 71, y: 61, off: true }]} />
          </FreqSlot>
        </Group>

        <Group $w={125}>
          <Legend $c="#7a7a7a" $l={6}>Синхронизация</Legend>
          <SyncGrid>
            <SyncCell><Ic s={22}><path d="M1 7l6 4-6 4z" fill="#1020e0" /><path d="M7 11h14" stroke="#1020e0" strokeDasharray="1 1.5" /><path d="M3 20q5 0 8-9t8-9" fill="none" stroke="#e01010" strokeWidth="1.2" /></Ic></SyncCell>
            <SyncCell><Ic s={22}><path d="M2 20h7V3h11" fill="none" stroke="#a0a0a0" strokeWidth="1.4" /><path d="M14 7l3 4h-2v6h-2v-6h-2z" fill="#a0a0a0" /></Ic></SyncCell>
            <SyncCell $active><Ic s={22}><path d="M2 3h9v17h9" fill="none" stroke="#a0a0a0" strokeWidth="1.4" /><path d="M16 17l3-4h-2V7h-2v6h-2z" fill="#a0a0a0" /></Ic></SyncCell>
            <SyncCell><Ic s={22}><path d="M1 5l5 3.5-5 3.5z" fill="#1020e0" /><path d="M6 8.5h14" stroke="#1020e0" strokeDasharray="1 1.5" /><path d="M2 19q7 0 9-9t8-9" fill="none" stroke="#e01010" /><path d="M11 10l8 7-3.5.5 2 4-2 1-2-4-2.5 2z" fill="#ffd800" stroke="#111" strokeWidth=".7" /></Ic></SyncCell>
            <SyncCell $span={2}><SyncCombo><Combo $w={47} $h={21} $bordered $disabled>1<DownTri $c="#a0a0a0" /></Combo></SyncCombo></SyncCell>
            <SyncCell><Ic s={22}><path d="M1 7h12l6 4-6 4H1z" fill="#dcdcdc" /><path d="M1 9h18M1 13h18" stroke="#999" strokeDasharray="2 1" /><path d="M11 1h8l-4 5zM11 21h8l-4-5z" fill="#9a9a9a" /></Ic></SyncCell>
            <SyncCell><Ic s={22}><path d="M1 7l8 4-8 4zM21 7l-8 4 8 4z" fill="#9a9a9a" /><path d="M9 11h4" stroke="#9a9a9a" /></Ic></SyncCell>
          </SyncGrid>
        </Group>

        <Group $w={175}>
          <Legend $c="#9db6d2" $l={6}>Управление</Legend>
          <CtlGrid>
            <CtlBtn $b="#c0c0c0" $off><Ic w={18} h={20} vb="0 0 18 20"><rect x="2" y="2" width="5" height="16" rx="2" fill="#a8a8a8" stroke="#888" /><rect x="10" y="2" width="5" height="16" rx="2" fill="#a8a8a8" stroke="#888" /></Ic></CtlBtn>
            <CtlBtn $b="#15406e"><Ic w={34} h={22} vb="0 0 34 22"><path d="M1 11Q8-9 17 11T33 11" fill="none" stroke="#e81010" strokeWidth="1.2" /></Ic></CtlBtn>
            <CtlBtn $b="#ee1010"><Ic w={40} h={22} vb="0 0 40 22"><path d="M1 7l2 2 2-4 3 5 2-4 2 3 3-4 2 4 3-4 2 4 3-4 2 3 3-4 3 4 2-2" fill="none" stroke="#e01010" /><path d="M1 16l2-2 2 4 3-5 2 4 2-3 3 4 2-4 3 4 2-4 3 4 2-3 3 4 3-4 2 2" fill="none" stroke="#1020d0" /></Ic></CtlBtn>
            <CtlBtn $b="#15406e"><Ic s={24}><text x="12" y="7" textAnchor="middle" fontSize="6.5" fontFamily="Liberation Mono" fontWeight="700" fill="#111">AUTO</text><path d="M2 9h20" stroke="#1040c0" strokeWidth="1.5" strokeDasharray="2 1" /><circle cx="12" cy="16" r="6.5" fill="#f4f4f4" stroke="#222" /><text x="12" y="19" textAnchor="middle" fontSize="8" fontFamily="Liberation Sans" fill="#111">V</text></Ic></CtlBtn>
            <CtlBtn $span={2} $b="#15406e">
              <StartInner>
                <Ic w={18} h={24} vb="0 0 18 24"><path d="M2 3l14 9-14 9z" fill="#10e010" stroke="#0a800a" strokeWidth=".6" /></Ic>
                <StartLabel>Пуск</StartLabel>
              </StartInner>
            </CtlBtn>
            <CtlBtn $b="#15406e"><Hz>21.74</Hz></CtlBtn>
            <CtlBtn $b="#15406e"><Ic s={24}><text x="12" y="7" textAnchor="middle" fontSize="6.5" fontFamily="Liberation Mono" fontWeight="700" fill="#111">AUTO</text><path d="M1 14l5 3-5 3zM1 17h8" fill="#1020e0" stroke="#1020e0" /><path d="M6 22q4 0 5-7t6-7" fill="none" stroke="#a01010" /><path d="M16 10l7 6-7 6z" fill="#10d010" stroke="#0a800a" strokeWidth=".6" /></Ic></CtlBtn>
          </CtlGrid>
        </Group>

        <Group $w={68}>
          <Legend $c="#000080" $l={7}>Таймеры</Legend>
          <TimerCol>
            <TimerBtn><Ic s={24}><circle cx="14" cy="12" r="10" fill="#fafafa" stroke="#222" /><path d="M14 12l2-6M14 12l-2 5" stroke="#888" /><path d="M1 6h6V2l7 7-7 7v-4H1z" fill="#40b8c0" stroke="#185050" strokeWidth=".6" /></Ic><DownTri /></TimerBtn>
            <TimerBtn><Ic s={24}><circle cx="11" cy="11" r="10" fill="#fafafa" stroke="#222" /><path d="M11 11l2-6M11 11l-2 5" stroke="#888" /><path d="M10 15h6v-4l7 6-7 6v-3h-6z" fill="#f040e0" stroke="#701070" strokeWidth=".6" /></Ic><DownTri /></TimerBtn>
          </TimerCol>
        </Group>
      </Groups>
    </Panel>

    <Status>
      <StatusCell $w={189}>USB Осциллограф не подключен</StatusCell>
      <StatusCell $grow />
      <StatusCell $w={46}>1.8</StatusCell>
    </Status>
    <Taskbar />
  </Page>
);

export default App;
